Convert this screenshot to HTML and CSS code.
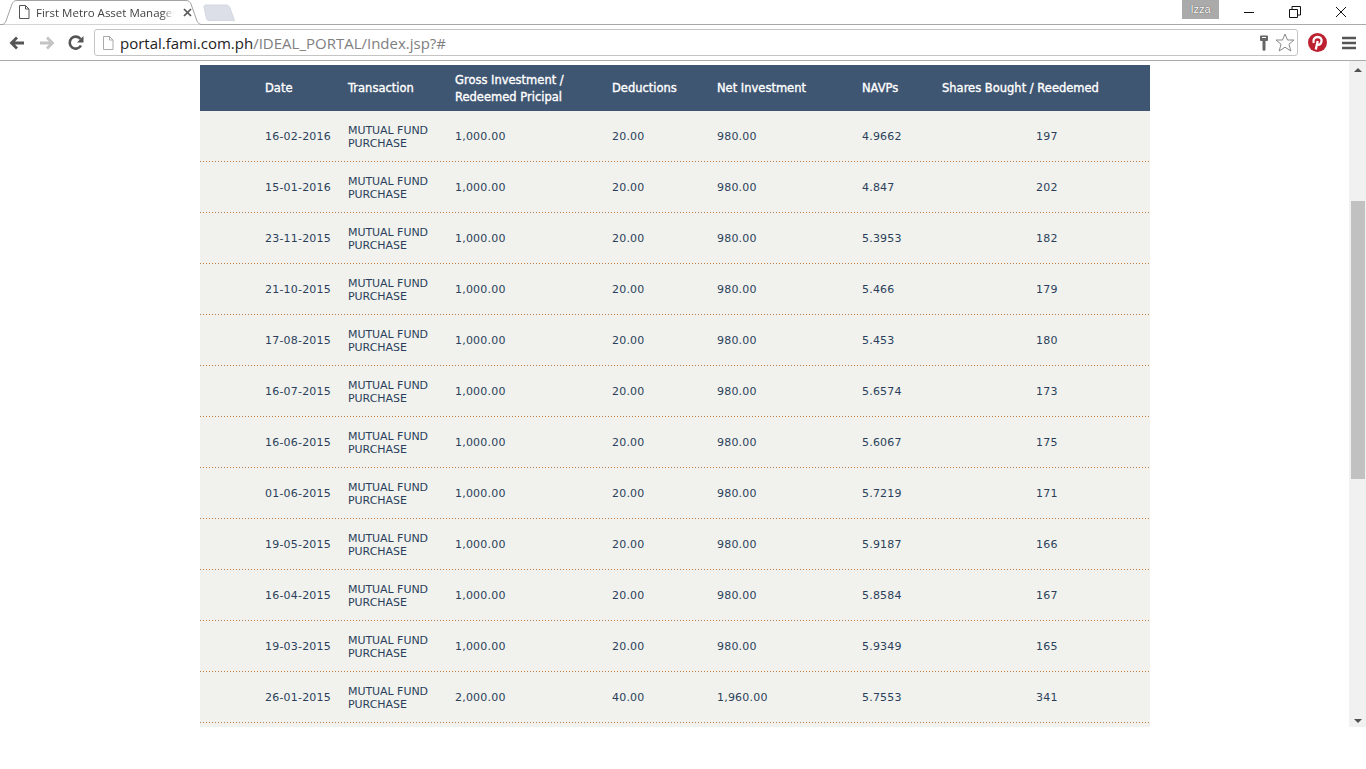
FILE: index.html
```html
<!DOCTYPE html>
<html lang="en">
<head>
<meta charset="utf-8">
<title>First Metro Asset Management</title>
<link rel="stylesheet" href="styles.css">
</head>
<body>
<div class="browser">
  <header class="tabstrip">
    <svg class="tab-shapes" width="240" height="25" viewBox="0 0 240 25">
      <path d="M0.5 24.500H2C4 24.500 5 23 6 21L12 4C13 2 14 .5 17 .5H186C189 .5 190 2 191 4L197 21C198 23 199 24.500 202 24.500H240" fill="#fff" stroke="#a3a3a3"/>
      <path d="M204 7C204 5.500 205 5 206 5H226C228 5 229 6 230 8L234.500 20.500H209C207.500 20.500 207 20 206.500 18.500Z" fill="#dcdfe8" stroke="#d3d7e0"/>
    </svg>
    <div class="tab">
      <svg class="page-icon" width="12" height="14" viewBox="0 0 12 14"><path d="M1.500.5H7.500L11 4V13.500H1.500ZM7.500.5V4H11" fill="#fff" stroke="#555"/></svg>
      <span class="tab-title">First Metro Asset Manager</span>
      <svg class="tab-close" width="9" height="9" viewBox="0 0 9 9"><path d="M1 1L8 8M8 1L1 8" stroke="#555" stroke-width="1.700"/></svg>
    </div>
    <div class="tab-spacer"></div>
    <div class="user-badge">Izza</div>
    <div class="win-controls">
      <svg width="12" height="12" viewBox="0 0 12 12"><path d="M1 6.500H11" stroke="#111" stroke-width="1"/></svg>
      <svg width="12" height="12" viewBox="0 0 12 12"><path d="M.5 3.500H8.500V11.500H.5ZM3 3.500V.5H11.500V9H8.500" fill="none" stroke="#111"/></svg>
      <svg width="12" height="12" viewBox="0 0 12 12"><path d="M1 1L11 11M11 1L1 11" stroke="#111" stroke-width="1"/></svg>
    </div>
  </header>
  <nav class="toolbar">
    <svg class="nav-icon" width="16" height="14" viewBox="0 0 16 14"><path d="M15 7H3M8 1.500L2.500 7L8 12.500" fill="none" stroke="#555" stroke-width="2.800"/></svg>
    <svg class="nav-icon" width="16" height="14" viewBox="0 0 16 14"><path d="M1 7H13M8 1.500L13.500 7L8 12.500" fill="none" stroke="#c4c4c4" stroke-width="2.800"/></svg>
    <svg class="nav-icon" width="16" height="16" viewBox="0 0 16 16"><path d="M13 10.500A6 6 0 1 1 12.500 4" fill="none" stroke="#555" stroke-width="2.600"/><path d="M15.500 1V7.500H9Z" fill="#555"/></svg>
    <div class="omnibox">
      <svg class="page-icon-sm" width="12" height="14" viewBox="0 0 12 14"><path d="M1.500.5H7.500L11 4V13.500H1.500ZM7.500.5V4H11" fill="#fff" stroke="#aaa"/></svg>
      <span class="url"><span class="url-host">portal.fami.com.ph</span>/IDEAL_PORTAL/Index.jsp?#</span>
      <svg class="key" width="10" height="16" viewBox="0 0 10 16"><path fill-rule="evenodd" d="M1 1.500C1 1 1.500.5 2 .5H8C8.500.5 9 1 9 1.500V5C9 5.500 8.500 6 8 6H6.500V15L5 16 3.500 15V6H2C1.500 6 1 5.500 1 5ZM3 2V3H7V2Z" fill="#666"/></svg>
      <svg class="star" width="20" height="19" viewBox="0 0 20 19"><path d="M10 1L12.500 7H19L14 11.200L15.800 18L10 14.200L4.200 18L6 11.200L1 7H7.500Z" fill="#fff" stroke="#888"/></svg>
    </div>
    <svg class="pinterest" width="19" height="19" viewBox="0 0 19 19"><circle cx="9.500" cy="9.500" r="9.500" fill="#bd2130"/><path d="M7.800 16.500L9.700 8M5.700 10C4.500 6.500 6.800 4 9.700 4C12.500 4 14 6 13.500 8.500C13 11 11.200 12.300 9.500 11.500C9 11.300 8.700 11 8.500 10.500" fill="none" stroke="#fff" stroke-width="2.300"/></svg>
    <svg class="menu" width="14" height="14" viewBox="0 0 14 14"><path d="M0 2H14M0 7H14M0 12H14" stroke="#555" stroke-width="2.600"/></svg>
  </nav>
  <div class="viewport">
    <main class="page">
      <section class="ledger">
        <div class="row head">
          <div>Date</div><div>Transaction</div><div class="gross">Gross Investment /<br>Redeemed Pricipal</div><div>Deductions</div><div>Net Investment</div><div>NAVPs</div><div>Shares Bought / Reedemed</div>
        </div>
        <div class="row"><div>16-02-2016</div><div class="tx">MUTUAL FUND<br>PURCHASE</div><div>1,000.00</div><div>20.00</div><div>980.00</div><div>4.9662</div><div class="shares">197</div></div>
        <div class="row"><div>15-01-2016</div><div class="tx">MUTUAL FUND<br>PURCHASE</div><div>1,000.00</div><div>20.00</div><div>980.00</div><div>4.847</div><div class="shares">202</div></div>
        <div class="row"><div>23-11-2015</div><div class="tx">MUTUAL FUND<br>PURCHASE</div><div>1,000.00</div><div>20.00</div><div>980.00</div><div>5.3953</div><div class="shares">182</div></div>
        <div class="row"><div>21-10-2015</div><div class="tx">MUTUAL FUND<br>PURCHASE</div><div>1,000.00</div><div>20.00</div><div>980.00</div><div>5.466</div><div class="shares">179</div></div>
        <div class="row"><div>17-08-2015</div><div class="tx">MUTUAL FUND<br>PURCHASE</div><div>1,000.00</div><div>20.00</div><div>980.00</div><div>5.453</div><div class="shares">180</div></div>
        <div class="row"><div>16-07-2015</div><div class="tx">MUTUAL FUND<br>PURCHASE</div><div>1,000.00</div><div>20.00</div><div>980.00</div><div>5.6574</div><div class="shares">173</div></div>
        <div class="row"><div>16-06-2015</div><div class="tx">MUTUAL FUND<br>PURCHASE</div><div>1,000.00</div><div>20.00</div><div>980.00</div><div>5.6067</div><div class="shares">175</div></div>
        <div class="row"><div>01-06-2015</div><div class="tx">MUTUAL FUND<br>PURCHASE</div><div>1,000.00</div><div>20.00</div><div>980.00</div><div>5.7219</div><div class="shares">171</div></div>
        <div class="row"><div>19-05-2015</div><div class="tx">MUTUAL FUND<br>PURCHASE</div><div>1,000.00</div><div>20.00</div><div>980.00</div><div>5.9187</div><div class="shares">166</div></div>
        <div class="row"><div>16-04-2015</div><div class="tx">MUTUAL FUND<br>PURCHASE</div><div>1,000.00</div><div>20.00</div><div>980.00</div><div>5.8584</div><div class="shares">167</div></div>
        <div class="row"><div>19-03-2015</div><div class="tx">MUTUAL FUND<br>PURCHASE</div><div>1,000.00</div><div>20.00</div><div>980.00</div><div>5.9349</div><div class="shares">165</div></div>
        <div class="row"><div>26-01-2015</div><div class="tx">MUTUAL FUND<br>PURCHASE</div><div>2,000.00</div><div>40.00</div><div>1,960.00</div><div>5.7553</div><div class="shares">341</div></div>
      </section>
    </main>
    <aside class="scrollbar">
      <div class="arrow-up"></div>
      <div class="thumb"></div>
      <div class="arrow-down"></div>
    </aside>
  </div>
</div>
</body>
</html>
```
FILE: styles.css
```css
html, body { margin: 0; padding: 0; background: #fff; overflow: hidden; }
.browser { height: 769px; display: flex; flex-direction: column; font-family: "DejaVu Sans", Verdana, sans-serif; }

.tabstrip { position: relative; height: 24px; flex: none; display: flex; align-items: flex-start; background: #fff; }
.tab-shapes { position: absolute; left: 0; top: 0; }
.tab { position: relative; display: flex; align-items: center; width: 175px; height: 24px; margin-left: 18px; }
.page-icon { flex: none; }
.tab-title { margin-left: 6px; width: 147px; flex: none; white-space: nowrap; font: 11.5px "Open Sans", "Noto Sans", sans-serif; color: #444; -webkit-mask-image: linear-gradient(90deg, #000 86%, transparent 94%); mask-image: linear-gradient(90deg, #000 86%, transparent 94%); }
.tab-close { flex: none; }
.tab-spacer { flex: 1; }
.user-badge { width: 37px; height: 19px; background: #aaa; color: #fff; font: 11px/19px "Liberation Sans", sans-serif; text-align: center; margin-right: 24px; text-shadow: 0 0 1px #222; }
.win-controls { display: flex; gap: 34px; padding: 6px 19px 0 0; }

.toolbar { height: 37px; flex: none; box-sizing: border-box; display: flex; align-items: center; background: #fff; border-top: 1px solid #a9a9a9; border-bottom: 1px solid #aaa; padding: 0 9px; }
.nav-icon { flex: none; margin-right: 14px; }
.nav-icon:nth-child(2) { margin-right: 13px; }
.nav-icon:nth-child(3) { margin-right: 10px; }
.omnibox { flex: 1; height: 27px; box-sizing: border-box; display: flex; align-items: center; border: 1px solid #c4c4c4; border-radius: 3px; padding: 0 2px 0 7px; }
.page-icon-sm { flex: none; }
.url { flex: 1; margin-left: 6px; font: 15px "Open Sans", "Noto Sans", sans-serif; color: #808080; white-space: nowrap; }
.url-host { color: #222; }
.key { flex: none; margin-right: 6px; }
.star { flex: none; }
.pinterest { flex: none; margin-left: 10px; }
.menu { flex: none; margin-left: 15px; margin-right: 1px; }

.viewport { height: 666px; flex: none; display: flex; }
.page { flex: 1; min-width: 0; overflow: hidden; padding-top: 4px; box-sizing: border-box; display: flex; }
.ledger { width: 950px; margin-left: 200px; background: #f1f2ed; }
.row { display: grid; grid-template-columns: 83px 107px 157px 105px 145px 80px 208px; height: 51px; box-sizing: border-box; padding: 0 0 1px 65px; align-items: center; font-size: 11px; line-height: 13px; letter-spacing: .2px; color: #2b3f5c; background: repeating-linear-gradient(90deg, #c07a3c 0 1px, transparent 1px 3px) left bottom / 100% 1px no-repeat; }
.row.head { height: 46px; padding-bottom: 0; background: #3f5672; color: #fff; font-size: 11.5px; line-height: 17px; letter-spacing: 0; -webkit-text-stroke: .35px #fff; }
.gross { margin-top: 2px; }
.tx { margin-top: 2px; letter-spacing: -.05px; }
.shares { padding-left: 94px; }

.scrollbar { width: 17px; flex: none; background: #f1f1f1; display: flex; flex-direction: column; align-items: center; }
.arrow-up { width: 0; height: 0; margin-top: 7px; border-left: 4px solid transparent; border-right: 4px solid transparent; border-bottom: 4px solid #505050; }
.thumb { width: 14px; height: 278px; margin: 129px 0 0 1px; background: #c1c1c1; }
.arrow-down { width: 0; height: 0; margin-top: auto; margin-bottom: 4px; border-left: 4px solid transparent; border-right: 4px solid transparent; border-top: 4px solid #505050; }
```
